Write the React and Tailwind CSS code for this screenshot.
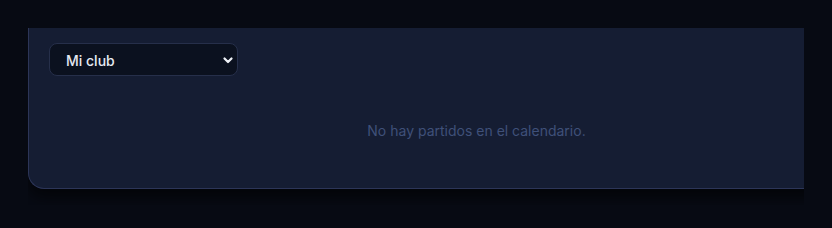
import React from 'react';

export default function App() {
    return (
        <div className="min-h-screen w-full bg-[#070a13] pt-7 pl-7" style={{ fontFamily: 'Inter, "Noto Sans", sans-serif' }}>
            {/* Clipped viewport */}
            <div className="w-[776px] overflow-hidden pb-4">
                <div className="w-[896px] h-[161px] bg-[#151d33] border-l border-b border-[#2c3558] rounded-bl-2xl shadow-[0_8px_14px_rgba(0,0,0,0.55)] flex flex-col px-5 pt-[15px]">
                    <div className="relative w-[189px]">
                        <select
                            defaultValue="mine"
                            className="appearance-none w-full h-[33px] rounded-lg bg-[#0b111f] border border-[#262f4a] text-[#e5e9f2] text-sm font-medium pl-4 pr-8 pt-[2px] outline-none"
                        >
                            <option value="mine">Mi club</option>
                        </select>
                        <svg className="pointer-events-none absolute right-[4px] top-1/2 -translate-y-1/2" width="12" height="12" viewBox="0 0 24 24" fill="none" stroke="#eef1f7" strokeWidth="4.5" strokeLinecap="round" strokeLinejoin="round">
                            <path d="M5 9l7 7 7-7" />
                        </svg>
                    </div>
                    <div className="flex-1 flex items-center justify-center pb-[2px]">
                        <p className="text-sm text-[#3f5079]">No hay partidos en el calendario.</p>
                    </div>
                </div>
            </div>
        </div>
    );
}
